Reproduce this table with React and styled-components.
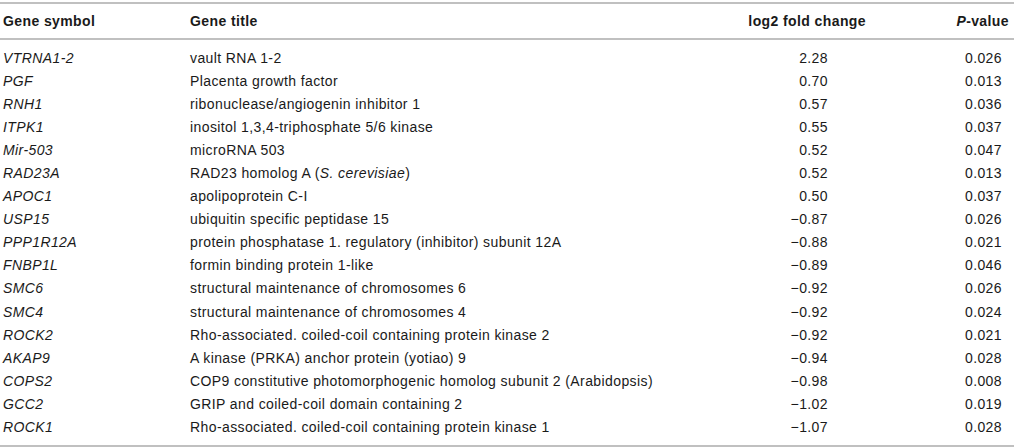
import React from "react";
import styled, { createGlobalStyle } from "styled-components";

const Global = createGlobalStyle`
  html, body { margin: 0; padding: 0; background: #fff; }
  body { font-family: "Liberation Sans", Arial, sans-serif; color: #1a1a1a; }
`;

const rows = [
  ["VTRNA1-2", "vault RNA 1-2", "2.28", "0.026"],
  ["PGF", "Placenta growth factor", "0.70", "0.013"],
  ["RNH1", "ribonuclease/angiogenin inhibitor 1", "0.57", "0.036"],
  ["ITPK1", "inositol 1,3,4-triphosphate 5/6 kinase", "0.55", "0.037"],
  ["Mir-503", "microRNA 503", "0.52", "0.047"],
  ["RAD23A", <>RAD23 homolog A (<i>S. cerevisiae</i>)</>, "0.52", "0.013"],
  ["APOC1", "apolipoprotein C-I", "0.50", "0.037"],
  ["USP15", "ubiquitin specific peptidase 15", "\u22120.87", "0.026"],
  ["PPP1R12A", "protein phosphatase 1. regulatory (inhibitor) subunit 12A", "\u22120.88", "0.021"],
  ["FNBP1L", "formin binding protein 1-like", "\u22120.89", "0.046"],
  ["SMC6", "structural maintenance of chromosomes 6", "\u22120.92", "0.026"],
  ["SMC4", "structural maintenance of chromosomes 4", "\u22120.92", "0.024"],
  ["ROCK2", "Rho-associated. coiled-coil containing protein kinase 2", "\u22120.92", "0.021"],
  ["AKAP9", "A kinase (PRKA) anchor protein (yotiao) 9", "\u22120.94", "0.028"],
  ["COPS2", "COP9 constitutive photomorphogenic homolog subunit 2 (Arabidopsis)", "\u22120.98", "0.008"],
  ["GCC2", "GRIP and coiled-coil domain containing 2", "\u22121.02", "0.019"],
  ["ROCK1", "Rho-associated. coiled-coil containing protein kinase 1", "\u22121.07", "0.028"],
];

const Table = styled.div`
  width: 1014px;
  padding-top: 2px;
  font-size: 14px;
  letter-spacing: 0.4px;
`;

const Head = styled.div`
  display: grid;
  grid-template-columns: 187px 1fr 190px 143px;
  align-items: center;
  height: 34px;
  border-top: 2px solid #c0c0c0;
  border-bottom: 2px solid #c0c0c0;
  font-weight: bold;
`;

const Body = styled.div`
  padding: 6px 0 6px;
  border-bottom: 2px solid #c0c0c0;
`;

const Row = styled.div`
  display: grid;
  grid-template-columns: 187px 1fr 190px 143px;
  align-items: center;
  height: 23.1px;
`;

const Cell = styled.div`
  padding-left: ${(p) => p.$pl || 0}px;
  padding-right: ${(p) => p.$pr || 0}px;
  text-align: ${(p) => (p.$right ? "right" : "left")};
  font-style: ${(p) => (p.$italic ? "italic" : "normal")};
  white-space: nowrap;
`;

export default function App() {
  return (
    <>
      <Global />
      <Table>
        <Head>
          <Cell $pl={3}>Gene symbol</Cell>
          <Cell $pl={3}>Gene title</Cell>
          <Cell $right $pr={5}>log2 fold change</Cell>
          <Cell $right $pr={5}><i>P</i>-value</Cell>
        </Head>
        <Body>
          {rows.map((r) => (
            <Row key={r[0]}>
              <Cell $pl={3} $italic>{r[0]}</Cell>
              <Cell $pl={3}>{r[1]}</Cell>
              <Cell $right $pr={43}>{r[2]}</Cell>
              <Cell $right $pr={12}>{r[3]}</Cell>
            </Row>
          ))}
        </Body>
      </Table>
    </>
  );
}
